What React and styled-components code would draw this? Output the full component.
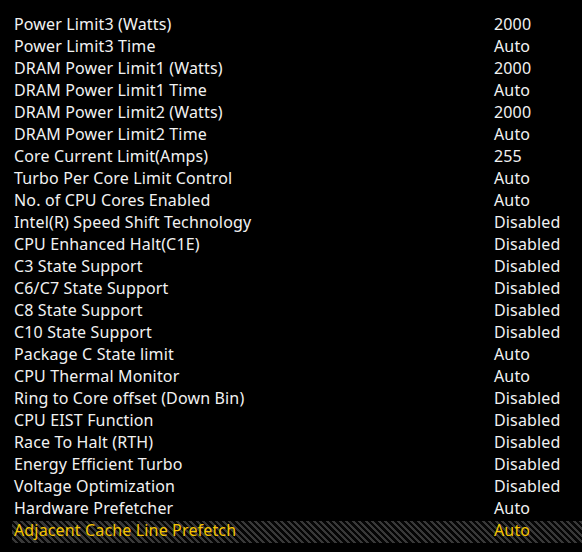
import React from 'react';
import styled, { createGlobalStyle } from 'styled-components';

const GlobalStyle = createGlobalStyle`
  html, body {
    margin: 0;
    padding: 0;
    background: #000;
  }
  body {
    font-family: "Noto Sans", "DejaVu Sans", sans-serif;
  }
`;

const Screen = styled.div`
  width: 582px;
  height: 552px;
  background: #000;
  padding-top: 15px;
  box-sizing: border-box;
  overflow: hidden;
`;

const List = styled.div`
  display: flex;
  flex-direction: column;
  margin-left: 12px;
`;

const Row = styled.div`
  display: grid;
  grid-template-columns: 480px 1fr;
  height: 22px;
  padding-left: 2px;
  align-items: start;
  font-size: 16px;
  letter-spacing: 0.15px;
  line-height: 18px;
  color: ${p => (p.$active ? '#f5c400' : '#f2f2f2')};
  background: ${p =>
    p.$active
      ? 'repeating-linear-gradient(45deg, #050505 0px, #050505 2.4px, #383838 2.4px, #383838 4.6px)'
      : 'transparent'};
`;

const Label = styled.span`
  white-space: nowrap;
`;

const Value = styled.span`
  white-space: nowrap;
`;

const items = [
  ['Power Limit3 (Watts)', '2000'],
  ['Power Limit3 Time', 'Auto'],
  ['DRAM Power Limit1 (Watts)', '2000'],
  ['DRAM Power Limit1 Time', 'Auto'],
  ['DRAM Power Limit2 (Watts)', '2000'],
  ['DRAM Power Limit2 Time', 'Auto'],
  ['Core Current Limit(Amps)', '255'],
  ['Turbo Per Core Limit Control', 'Auto'],
  ['No. of CPU Cores Enabled', 'Auto'],
  ['Intel(R) Speed Shift Technology', 'Disabled'],
  ['CPU Enhanced Halt(C1E)', 'Disabled'],
  ['C3 State Support', 'Disabled'],
  ['C6/C7 State Support', 'Disabled'],
  ['C8 State Support', 'Disabled'],
  ['C10 State Support', 'Disabled'],
  ['Package C State limit', 'Auto'],
  ['CPU Thermal Monitor', 'Auto'],
  ['Ring to Core offset (Down Bin)', 'Disabled'],
  ['CPU EIST Function', 'Disabled'],
  ['Race To Halt (RTH)', 'Disabled'],
  ['Energy Efficient Turbo', 'Disabled'],
  ['Voltage Optimization', 'Disabled'],
  ['Hardware Prefetcher', 'Auto'],
  ['Adjacent Cache Line Prefetch', 'Auto'],
];

export default function App() {
  return (
    <>
      <GlobalStyle />
      <Screen>
        <List>
          {items.map(([label, value], i) => (
            <Row key={label} $active={i === items.length - 1}>
              <Label>{label}</Label>
              <Value>{value}</Value>
            </Row>
          ))}
        </List>
      </Screen>
    </>
  );
}
